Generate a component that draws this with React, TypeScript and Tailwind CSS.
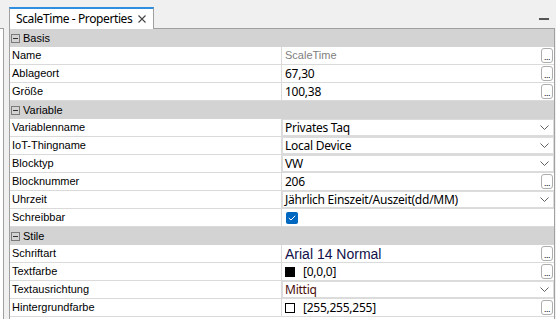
import React from 'react';

type Kind = 'text' | 'button' | 'select' | 'check' | 'gray';

interface Row {
  label: string;
  value?: string;
  kind: Kind;
  swatch?: 'black' | 'white';
  big?: boolean;
  tone?: string;
}

interface Section {
  title: string;
  rows: Row[];
}

const sections: Section[] = [
  {
    title: 'Basis',
    rows: [
      { label: 'Name', value: 'ScaleTime', kind: 'gray' },
      { label: 'Ablageort', value: '67,30', kind: 'button' },
      { label: 'Größe', value: '100,38', kind: 'button' },
    ],
  },
  {
    title: 'Variable',
    rows: [
      { label: 'Variablenname', value: 'Privates Taq', kind: 'select' },
      { label: 'IoT-Thingname', value: 'Local Device', kind: 'select' },
      { label: 'Blocktyp', value: 'VW', kind: 'select' },
      { label: 'Blocknummer', value: '206', kind: 'button' },
      { label: 'Uhrzeit', value: 'Jährlich Einszeit/Auszeit(dd/MM)', kind: 'select' },
      { label: 'Schreibbar', kind: 'check' },
    ],
  },
  {
    title: 'Stile',
    rows: [
      { label: 'Schriftart', value: 'Arial 14 Normal', kind: 'button', big: true },
      { label: 'Textfarbe', value: '[0,0,0]', kind: 'button', swatch: 'black' },
      { label: 'Textausrichtung', value: 'Mittiq', kind: 'select', tone: 'text-[#4a0e0e]' },
      { label: 'Hintergrundfarbe', value: '[255,255,255]', kind: 'button', swatch: 'white' },
    ],
  },
];

const labelFont = { fontFamily: '"Liberation Sans", Arial, sans-serif' };
const valueFont = { fontFamily: '"Noto Sans", "Segoe UI", sans-serif' };

const Chevron = () => (
  <svg width="9" height="5" viewBox="0 0 9 5" className="shrink-0">
    <path d="M0.5 0.5 L4.5 4.5 L8.5 0.5" fill="none" stroke="#606060" strokeWidth="1" />
  </svg>
);

const DotsButton = () => (
  <div className="w-[12px] h-[15px] mt-[1px] self-start shrink-0 border border-[#adadad] rounded-[3px] bg-white flex items-end justify-center">
    <span className="text-[9px] leading-[9px] text-black tracking-[-0.5px]" style={labelFont}>...</span>
  </div>
);

const Check = () => (
  <div className="w-[12px] h-[12px] rounded-[2px] bg-[#0067c0] flex items-center justify-center">
    <svg width="8" height="6" viewBox="0 0 8 6">
      <path d="M0.8 3 L3 5 L7.2 0.8" fill="none" stroke="#ffffff" strokeWidth="1" />
    </svg>
  </div>
);

const MinusBox = () => (
  <div className="w-[9px] h-[9px] border border-[#7a7a7a] flex items-center justify-center shrink-0">
    <div className="w-[5px] h-[1px] bg-[#333333]" />
  </div>
);

const CloseX = () => (
  <svg width="8" height="8" viewBox="0 0 8 8" className="shrink-0">
    <path d="M0.5 0.5 L7.5 7.5 M7.5 0.5 L0.5 7.5" fill="none" stroke="#444444" strokeWidth="1.1" />
  </svg>
);

function ValueCell({ row }: { row: Row }) {
  if (row.kind === 'select') {
    return (
      <div className="flex-1 h-full border border-[#dcdcdc] flex items-center pl-[2px] pr-[4px] bg-white">
        <span className={`flex-1 text-[12px] tracking-[-0.25px] leading-none ${row.tone ?? 'text-black'}`} style={valueFont}>
          {row.value}
        </span>
        <Chevron />
      </div>
    );
  }
  if (row.kind === 'check') {
    return (
      <div className="flex-1 h-full flex items-center pl-[4px]">
        <Check />
      </div>
    );
  }
  if (row.kind === 'gray') {
    return (
      <div className="flex-1 h-full flex items-center pl-[3px] pr-[1px]">
        <span className="flex-1 text-[11px] text-[#808080] leading-none" style={labelFont}>{row.value}</span>
        <DotsButton />
      </div>
    );
  }
  return (
    <div className="flex-1 h-full flex items-center pl-[3px] pr-[1px]">
      <div className="flex-1 flex items-center">
        {row.swatch === 'black' && <div className="w-[10px] h-[10px] bg-black mr-[8px]" />}
        {row.swatch === 'white' && <div className="w-[10px] h-[10px] bg-white border border-black mr-[8px]" />}
        <span
          className={`leading-none ${row.big ? 'text-[14px] text-[#10104a]' : 'text-[12px] tracking-[-0.25px] text-black'}`}
          style={row.big ? labelFont : valueFont}
        >
          {row.value}
        </span>
      </div>
      <DotsButton />
    </div>
  );
}

export default function App() {
  return (
    <div className="w-[556px] h-[319px] bg-[#f0f0f0] overflow-hidden flex">
      {/* neighbouring panel edge */}
      <div className="w-[9px] flex flex-col shrink-0">
        <div className="h-[28px]" />
        <div className="w-[4px] flex-1 bg-white border-t border-r border-[#a0a0a0]" />
      </div>

      <div className="w-[546px] flex flex-col shrink-0">
        {/* tab strip */}
        <div className="h-[29px] flex items-end shrink-0">
          <div className="h-[22px] w-[145px] shrink-0 whitespace-nowrap bg-white border-t-2 border-t-[#2f8ee0] border-l border-r border-[#a0a0a0] flex items-center pl-[6px] gap-[6px]">
            <span className="text-[12px] tracking-[-0.4px] text-black leading-none" style={valueFont}>ScaleTime - Properties</span>
            <CloseX />
          </div>
          <div className="flex-1 h-full border-b border-[#a0a0a0] flex items-center justify-end pr-[6px]">
            <div className="w-[10px] h-[2px] bg-[#555555] mt-[9px]" />
          </div>
        </div>

        {/* property grid */}
        <div className="flex-1 bg-white border-l border-r border-[#a0a0a0] flex flex-col">
          {sections.map((s) => (
            <React.Fragment key={s.title}>
              <div className="h-[18px] bg-[#d3d3d3] flex items-center gap-[3px] pl-[1px] shrink-0">
                <MinusBox />
                <span className="text-[11px] text-black leading-none" style={labelFont}>{s.title}</span>
              </div>
              {s.rows.map((r) => (
                <div key={r.label} className="h-[18px] flex border-b border-[#dadada] shrink-0">
                  <div className="w-[272px] h-full border-r border-[#dadada] flex items-center pl-[2px] shrink-0">
                    <span className="text-[11px] text-black leading-none" style={labelFont}>{r.label}</span>
                  </div>
                  <ValueCell row={r} />
                </div>
              ))}
            </React.Fragment>
          ))}
        </div>
      </div>
    </div>
  );
}
